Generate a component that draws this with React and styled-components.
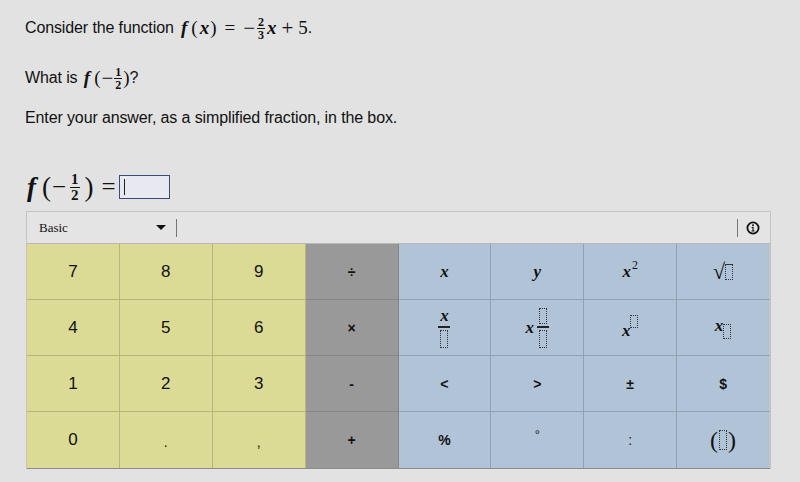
import React from "react";
import styled, { createGlobalStyle } from "styled-components";

const Global = createGlobalStyle`
  html, body { margin: 0; padding: 0; background: #e2e2e2; }
  body { font-family: "Liberation Sans", Arial, sans-serif; color: #111; }
`;

const Page = styled.div`
  width: 800px;
  height: 482px;
  box-sizing: border-box;
  padding: 18px 0 0 25px;
  display: flex;
  flex-direction: column;
  background: #e2e2e2;
`;

const Para = styled.p`
  margin: 0 0 ${(p) => p.$mb || 0}px;
  font-size: 16px;
  letter-spacing: -0.12px;
  line-height: 20px;
  height: 20px;
  display: flex;
  align-items: center;
  white-space: nowrap;
`;

const M = styled.span`
  font-family: "Liberation Serif", "Times New Roman", serif;
  font-style: ${(p) => (p.$up ? "normal" : "italic")};
  font-weight: ${(p) => (p.$bold ? 700 : 400)};
  font-size: ${(p) => p.$size || 19}px;
  letter-spacing: 0;
  margin: 0 ${(p) => p.$mr ?? p.$mx ?? 0}px 0 ${(p) => p.$ml ?? p.$mx ?? 0}px;
  display: inline-block;
`;

const Frac = styled.span`
  display: inline-flex;
  flex-direction: column;
  align-items: center;
  font-family: "Liberation Serif", "Times New Roman", serif;
  font-weight: 700;
  font-size: ${(p) => p.$size || 12}px;
  line-height: 1;
  vertical-align: middle;
  margin: 0 ${(p) => p.$mx || 1}px;
  & > span:first-child { border-bottom: 1px solid #111; padding: 0 1px 0; }
`;

const EqRow = styled.div`
  display: flex;
  align-items: center;
  height: 32px;
  margin: 43px 0 8px 2px;
  font-family: "Liberation Serif", "Times New Roman", serif;
`;

const AnswerBox = styled.div`
  width: 45px;
  height: 22px;
  border: 1px solid #3b4a7c;
  background: #e8e8f0;
  margin-left: 1px;
  display: flex;
  align-items: center;
  padding-left: 4px;
  box-sizing: content-box;
  &::before {
    content: "";
    width: 1px;
    height: 16px;
    background: #222;
  }
`;

const Keypad = styled.div`
  width: 743px;
  margin-left: 1px;
  border: 1px solid #c4c4c4;
  border-bottom: none;
  display: flex;
  flex-direction: column;
`;

const Toolbar = styled.div`
  height: 31px;
  display: flex;
  align-items: center;
  background: #e4e4e4;
  border-bottom: 1px solid #b8b8b8;
  padding-left: 12px;
  font-family: "Liberation Serif", "Times New Roman", serif;
  font-size: 13px;
`;

const Caret = styled.span`
  margin-left: 88px;
  width: 0;
  height: 0;
  border-left: 5px solid transparent;
  border-right: 5px solid transparent;
  border-top: 5px solid #111;
`;

const Sep = styled.span`
  width: 1px;
  height: 18px;
  background: #777;
  margin-left: ${(p) => p.$ml || 0}px;
`;

const Info = styled.span`
  margin-left: 8px;
  margin-right: 10px;
  display: flex;
`;

const Grid = styled.div`
  display: grid;
  grid-template-columns: repeat(8, 1fr);
  grid-template-rows: repeat(4, 56px);
  border-bottom: 1px solid #8c8c8c;
`;

const palette = {
  num: { bg: "#dcdb95", line: "#b7b579" },
  op: { bg: "#999999", line: "#868686" },
  fn: { bg: "#b1c4d7", line: "#8fa1b3" },
};

const Key = styled.div`
  background: ${(p) => palette[p.$kind].bg};
  border-right: 1px solid ${(p) => (p.$last ? "#c4c4c4" : palette[p.$kind].line)};
  border-bottom: ${(p) => (p.$lastRow ? "none" : `1px solid ${palette[p.$kind].line}`)};
  display: flex;
  align-items: center;
  justify-content: center;
  font-size: ${(p) => (p.$kind === "num" ? 17 : 14)}px;
  font-weight: ${(p) => (p.$kind === "num" ? 400 : 700)};
  color: #111;
  box-sizing: border-box;
`;

const Ph = styled.span`
  display: inline-block;
  width: ${(p) => p.$w || 7}px;
  height: ${(p) => p.$h || 14}px;
  border: 1px dotted #333;
  box-sizing: border-box;
`;

const KMath = styled.span`
  font-family: "Liberation Serif", "Times New Roman", serif;
  font-style: italic;
  font-weight: 700;
  font-size: 17px;
  display: inline-flex;
  align-items: ${(p) => p.$align || "center"};
`;

const Sup = styled.span`
  font-size: 12px;
  font-style: normal;
  font-weight: 400;
  margin-left: 1px;
  align-self: flex-start;
  margin-top: -4px;
`;

const StackFrac = styled.span`
  display: inline-flex;
  flex-direction: column;
  align-items: center;
  margin-left: ${(p) => p.$ml || 0}px;
  & > *:first-child { margin-bottom: 2px; }
  & > *:last-child { margin-top: 2px; }
`;

const Bar = styled.span`
  width: 12px;
  height: 2px;
  background: #222;
`;

const Small = styled.span`
  font-weight: 400;
  font-size: ${(p) => p.$size || 14}px;
  position: relative;
  top: ${(p) => p.$top || 0}px;
`;

const Paren = styled.span`
  font-family: "Liberation Serif", "Times New Roman", serif;
  font-weight: 400;
  font-size: 24px;
  display: inline-flex;
  align-items: center;
  gap: 1px;
`;

const Root = styled.span`
  font-style: normal;
  font-weight: 400;
  font-size: 22px;
  line-height: 1;
`;

const InfoIcon = () => (
  <svg width="14" height="14" viewBox="0 0 14 14">
    <circle cx="7" cy="7" r="5.6" fill="none" stroke="#111" strokeWidth="1.8" />
    <circle cx="7" cy="4.2" r="1" fill="#111" />
    <path d="M5.6 6h2v3.6h0.9v1H5.6v-1h0.9V7H5.6z" fill="#111" />
  </svg>
);

const keys = [
  ["7", "num"], ["8", "num"], ["9", "num"], ["÷", "op"],
  [<KMath>x</KMath>, "fn"], [<KMath>y</KMath>, "fn"],
  [<KMath>x<Sup>2</Sup></KMath>, "fn"],
  [<KMath><Root>√</Root><Ph $w={8} $h={16} style={{ borderTop: "1px solid #333", marginTop: 1 }} /></KMath>, "fn"],
  ["4", "num"], ["5", "num"], ["6", "num"], ["×", "op"],
  [<KMath><StackFrac><span style={{ lineHeight: 1 }}>x</span><Bar /><Ph $w={8} $h={18} /></StackFrac></KMath>, "fn"],
  [<KMath>x<StackFrac $ml={3}><Ph $w={8} $h={16} /><Bar /><Ph $w={8} $h={18} /></StackFrac></KMath>, "fn"],
  [<KMath $align="flex-start"><span style={{ marginTop: 6 }}>x</span><Ph $w={8} $h={13} /></KMath>, "fn"],
  [<KMath $align="flex-start"><span>x</span><Ph $w={8} $h={15} style={{ marginTop: 8 }} /></KMath>, "fn"],
  ["1", "num"], ["2", "num"], ["3", "num"], ["-", "op"],
  ["<", "fn"], [">", "fn"], ["±", "fn"], ["$", "fn"],
  ["0", "num"], [<Small $top={2}>.</Small>, "num"], [<Small $top={2}>,</Small>, "num"], ["+", "op"],
  ["%", "fn"], [<Small $top={-6} $size={13}>°</Small>, "fn"], [<Small>:</Small>, "fn"],
  [<Paren>(<Ph $w={8} $h={20} />)</Paren>, "fn"],
];

export default function App() {
  return (
    <Page>
      <Global />
      <Para $mb={30}>
        Consider the function&nbsp;
        <M $bold $ml={3}>f</M>
        <M $up $ml={4} $mr={2}>(</M>
        <M $bold>x</M>
        <M $up $mx={1}>)</M>
        <M $up $ml={7} $mr={8}>=</M>
        <M $up $size={21}>−</M>
        <Frac $mx={2}><span>2</span><span>3</span></Frac>
        <M $bold>x</M>
        <M $up $size={21} $mx={5}>+</M>
        <M $up>5</M>.
      </Para>
      <Para $mb={20}>
        What is&nbsp;
        <M $bold $ml={2}>f</M>
        <M $up $ml={4} $mr={1}>(</M>
        <M $up $size={21}>−</M>
        <Frac><span>1</span><span>2</span></Frac>
        <M $up>)</M>?
      </Para>
      <Para>Enter your answer, as a simplified fraction, in the box.</Para>
      <EqRow>
        <M $bold $size={27}>f</M>
        <M $up $size={27} $ml={6} $mr={1}>(</M>
        <M $up $size={25}>−</M>
        <Frac $size={15} $mx={4}><span>1</span><span>2</span></Frac>
        <M $up $size={27} $ml={1} $mr={8}>)</M>
        <M $up $size={25} $mr={2}>=</M>
        <AnswerBox />
      </EqRow>
      <Keypad>
        <Toolbar>
          Basic
          <Caret />
          <Sep $ml={10} />
          <span style={{ flex: 1 }} />
          <Sep />
          <Info><InfoIcon /></Info>
        </Toolbar>
        <Grid>
          {keys.map(([label, kind], i) => (
            <Key key={i} $kind={kind} $last={i % 8 === 7} $lastRow={i >= 24}>
              {label}
            </Key>
          ))}
        </Grid>
      </Keypad>
    </Page>
  );
}
